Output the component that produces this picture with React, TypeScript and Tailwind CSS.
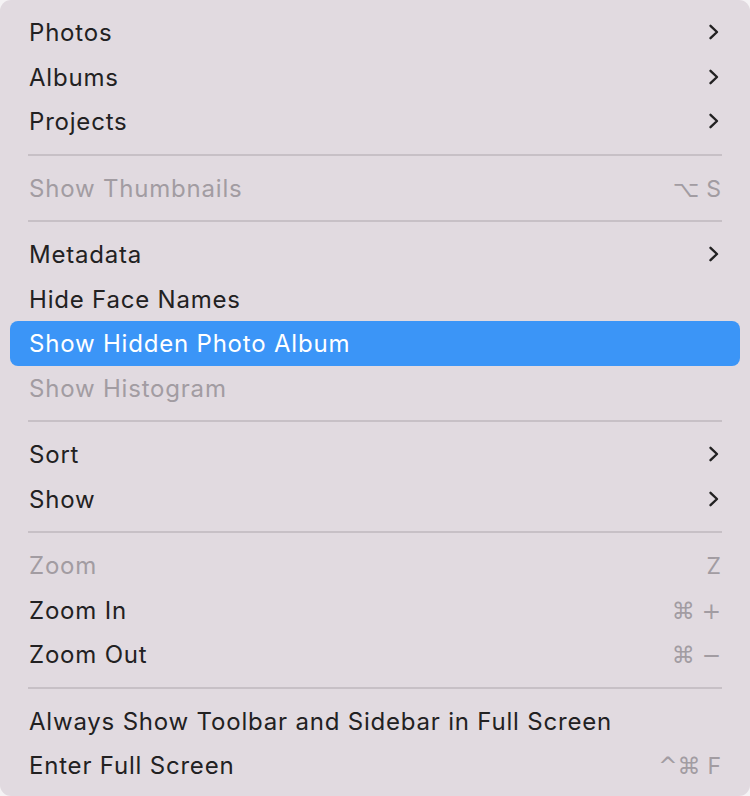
import React from "react";

type Item =
  | { sep: true }
  | {
      sep?: false;
      label: string;
      sub?: boolean;
      disabled?: boolean;
      active?: boolean;
      keys?: string[];
    };

const items: Item[] = [
  { label: "Photos", sub: true },
  { label: "Albums", sub: true },
  { label: "Projects", sub: true },
  { sep: true },
  { label: "Show Thumbnails", disabled: true, keys: ["⌥", "S"] },
  { sep: true },
  { label: "Metadata", sub: true },
  { label: "Hide Face Names" },
  { label: "Show Hidden Photo Album", active: true },
  { label: "Show Histogram", disabled: true },
  { sep: true },
  { label: "Sort", sub: true },
  { label: "Show", sub: true },
  { sep: true },
  { label: "Zoom", disabled: true, keys: ["Z"] },
  { label: "Zoom In", keys: ["⌘", "+"] },
  { label: "Zoom Out", keys: ["⌘", "−"] },
  { sep: true },
  { label: "Always Show Toolbar and Sidebar in Full Screen" },
  { label: "Enter Full Screen", keys: ["^⌘", "F"] },
];

function Chevron() {
  return (
    <svg width="12" height="16" viewBox="0 0 12 16" fill="none" className="mr-[1px]">
      <polyline
        points="2.5,1.8 9,8 2.5,14.2"
        stroke="currentColor"
        strokeWidth="2.4"
        strokeLinecap="round"
        strokeLinejoin="round"
      />
    </svg>
  );
}

export default function App() {
  return (
    <div className="w-[750px] h-[796px] bg-[#f5f3f5]">
      <div
        className="w-full h-full bg-[#e1dae0] rounded-[11px] pt-[10px] px-[10px] flex flex-col text-[24px] text-[#222122]"
        style={{ fontFamily: "Inter, 'DejaVu Sans', sans-serif" }}
      >
        {items.map((it, i) =>
          it.sep ? (
            <div key={i} className="h-[22px] flex items-center px-[18px]">
              <div className="h-[2px] w-full bg-[#c7c0c6]" />
            </div>
          ) : (
            <div
              key={i}
              className={`h-[44.5px] shrink-0 flex items-center justify-between pl-[19px] pr-[19px] rounded-[8px] ${
                it.active ? "bg-[#3b95f7] text-white" : it.disabled ? "text-[#a29ca2]" : ""
              }`}
            >
              <span className="tracking-[0.8px] pt-[2px]">{it.label}</span>
              {it.sub && <Chevron />}
              {it.keys && (
                <span className="flex items-center gap-[7px] text-[#a29ca2] text-[23px] pt-[2px]">
                  {it.keys.map((k, j) => (
                    <span
                      key={j}
                      style={{
                        fontFamily:
                          j === it.keys!.length - 1 && k.length === 1 && /[A-Z]/.test(k)
                            ? "Inter, sans-serif"
                            : "'DejaVu Sans', Inter, sans-serif",
                      }}
                    >
                      {k}
                    </span>
                  ))}
                </span>
              )}
            </div>
          )
        )}
      </div>
    </div>
  );
}
